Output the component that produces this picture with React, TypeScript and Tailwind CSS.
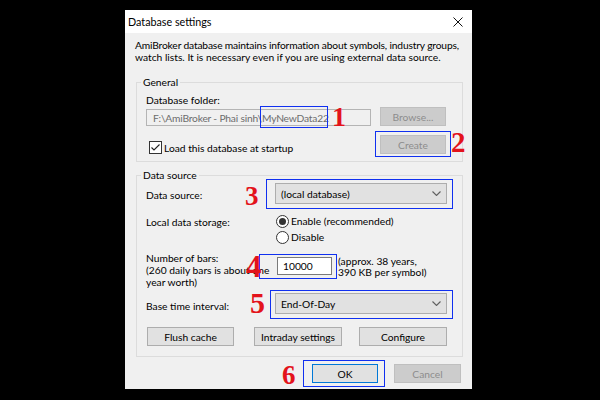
import type { ReactNode } from "react";

// red step numbers drawn over the screenshot
const Mark = ({ n, className }: { n: string; className: string }) => (
    <span
        className={`absolute font-['Liberation_Serif',serif] font-bold leading-none text-[#e3131b] pointer-events-none ${className}`}
    >
        {n}
    </span>
);

// blue highlight rectangles
const Frame = ({ className }: { className: string }) => (
    <span className={`absolute border border-[#1030f0] pointer-events-none ${className}`} />
);

const Button = ({
    children,
    className = "",
    disabled,
    isDefault,
}: {
    children: ReactNode;
    className?: string;
    disabled?: boolean;
    isDefault?: boolean;
}) => (
    <div
        className={`flex items-center justify-center h-[19px] border ${
            disabled
                ? "bg-[#cccccc] border-[#bfbfbf] text-[#8d8d8d]"
                : isDefault
                ? "bg-[#e1e1e1] border-[#0078d7] text-black"
                : "bg-[#e1e1e1] border-[#adadad] text-black"
        } ${className}`}
    >
        {children}
    </div>
);

const Combo = ({ value }: { value: string }) => (
    <div className="flex items-center justify-between w-[172px] h-[21px] pl-[5px] pr-[5px] bg-[#e1e1e1] border border-[#adadad]">
        <span>{value}</span>
        <svg width="9" height="5" viewBox="0 0 9 5">
            <path d="M0.5 0.5 L4.5 4.5 L8.5 0.5" fill="none" stroke="#5f5f5f" strokeWidth="1.1" />
        </svg>
    </div>
);

const Radio = ({ label, checked }: { label: string; checked?: boolean }) => (
    <div className="flex items-center h-[16px] gap-[2px]">
        <span className="flex items-center justify-center size-[13px] rounded-full border border-[#333333] bg-white">
            {checked && <span className="size-[7px] rounded-full bg-[#333333]" />}
        </span>
        <span>{label}</span>
    </div>
);

const App = () => {
    return (
        <div className="w-[600px] h-[400px] bg-black pl-[125px] pt-[10px] font-['Lato',sans-serif] text-[10.25px] leading-[12px] text-black">
            <div className="w-[347px] h-[379px] flex flex-col bg-[#f0f0f0] overflow-hidden">
                {/* ── Title bar ── */}
                <div className="h-[23px] shrink-0 bg-white flex items-center justify-between pl-[3px] pr-[9px] text-[10.75px]">
                    <span>Database settings</span>
                    <svg width="10" height="10" viewBox="0 0 10 10">
                        <path d="M0.5 0.5 L9.5 9.5 M9.5 0.5 L0.5 9.5" stroke="#111" strokeWidth="1" />
                    </svg>
                </div>

                <p className="mt-[6px] ml-[10px] whitespace-nowrap">
                    <span className="tracking-[-0.16px]">
                        AmiBroker database maintains information about symbols, industry groups,
                    </span>
                    <br />
                    watch lists. It is necessary even if you are using external data source.
                </p>

                {/* ── General ── */}
                <fieldset className="mt-[13px] ml-[11px] w-[327px] border border-[#dcdcdc] p-0">
                    <legend className="ml-[4px] px-[2px]">General</legend>
                    <div className="flex flex-col pl-[9px] pr-[16px] pb-[7px]">
                        <div className="mt-[6px]">Database folder:</div>
                        <div className="flex items-end justify-between mt-[1px]">
                            <div className="relative">
                                <div className="w-[225px] h-[17px] flex items-center pl-[6px] border border-[#b4b4b4] bg-[#f0f0f0] text-[#6d6d6d] whitespace-nowrap tracking-[-0.2px]">
                                    {"F:\\AmiBroker - Phai sinh\\MyNewData22"}
                                </div>
                                <Frame className="left-[114px] -top-[3px] w-[68px] h-[22px]" />
                                <Mark n="1" className="left-[186px] -top-[6px] text-[28px]" />
                            </div>
                            <Button disabled className="w-[66px]">
                                Browse...
                            </Button>
                        </div>
                        <div className="flex items-start mt-[9px]">
                            <div className="flex items-center gap-[2px] ml-[3px] mt-[6px]">
                                <span className="size-[13px] border border-[#333333] bg-white">
                                    <svg width="11" height="11" viewBox="0 0 11 11">
                                        <path d="M1.5 5.5 L4 8 L9.5 2.5" fill="none" stroke="#222" strokeWidth="1.1" />
                                    </svg>
                                </span>
                                <span>Load this database at startup</span>
                            </div>
                            <div className="relative ml-auto">
                                <Button disabled className="w-[66px]">
                                    Create
                                </Button>
                                <Frame className="-left-[5px] -right-[5px] -top-[4px] -bottom-[3px]" />
                                <Mark n="2" className="left-[71px] -top-[7px] text-[29px]" />
                            </div>
                        </div>
                    </div>
                </fieldset>

                {/* ── Data source ── */}
                <fieldset className="mt-[7px] ml-[11px] w-[327px] border border-[#dcdcdc] p-0">
                    <legend className="ml-[4px] px-[2px]">Data source</legend>
                    <div className="flex flex-col pl-[9px] pb-[10px]">
                        <div className="flex items-start mt-[2px]">
                            <div className="w-[129px] mt-[6px]">Data source:</div>
                            <div className="relative">
                                <Combo value="(local database)" />
                                <Frame className="-left-[9px] -right-[6px] -top-[4px] -bottom-[5px]" />
                                <Mark n="3" className="-left-[30px] top-0 text-[27px]" />
                            </div>
                        </div>

                        <div className="flex items-start mt-[9px]">
                            <div className="w-[130px] mt-[3px]">Local data storage:</div>
                            <div className="flex flex-col">
                                <Radio label="Enable (recommended)" checked />
                                <Radio label="Disable" />
                            </div>
                        </div>

                        <div className="flex items-start mt-[7px]">
                            <div className="w-[131px] whitespace-nowrap">
                                Number of bars:
                                <br />
                                (260 daily bars is about one
                                <br />
                                year worth)
                            </div>
                            <div className="relative mt-[5px]">
                                <div className="w-[55px] h-[18px] flex items-center pl-[5px] border border-[#7a7a7a] bg-white">
                                    10000
                                </div>
                                <Frame className="-left-[18px] -right-[5px] -top-[3px] -bottom-[4px]" />
                                <Mark n="4" className="-left-[31px] -top-[6px] text-[31px]" />
                            </div>
                            <div className="ml-[6px] mt-[4px] leading-[11px] whitespace-nowrap">
                                (approx. 38 years,
                                <br />
                                390 KB per symbol)
                            </div>
                        </div>

                        <div className="flex items-start mt-[5px]">
                            <div className="w-[129px] mt-[7px]">Base time interval:</div>
                            <div className="relative">
                                <Combo value="End-Of-Day" />
                                <Frame className="-left-[5px] -right-[6px] -top-[3px] -bottom-[5px]" />
                                <Mark n="5" className="-left-[25px] -top-[5px] text-[30px]" />
                            </div>
                        </div>

                        <div className="flex mt-[13px] ml-[1px]">
                            <Button className="w-[87px]">Flush cache</Button>
                            <Button className="w-[88px] ml-[20px]">Intraday settings</Button>
                            <Button className="w-[88px] ml-[17px]">Configure</Button>
                        </div>
                    </div>
                </fieldset>

                {/* ── Footer ── */}
                <div className="flex justify-end gap-[16px] mt-[7px] pr-[11px]">
                    <div className="relative">
                        <Button isDefault className="w-[66px]">
                            OK
                        </Button>
                        <Frame className="-left-[9px] -right-[7px] -top-[4px] -bottom-[4px]" />
                        <Mark n="6" className="-left-[30px] -top-[2px] text-[27px]" />
                    </div>
                    <Button disabled className="w-[67px]">
                        Cancel
                    </Button>
                </div>
            </div>
        </div>
    );
};

export default App;
